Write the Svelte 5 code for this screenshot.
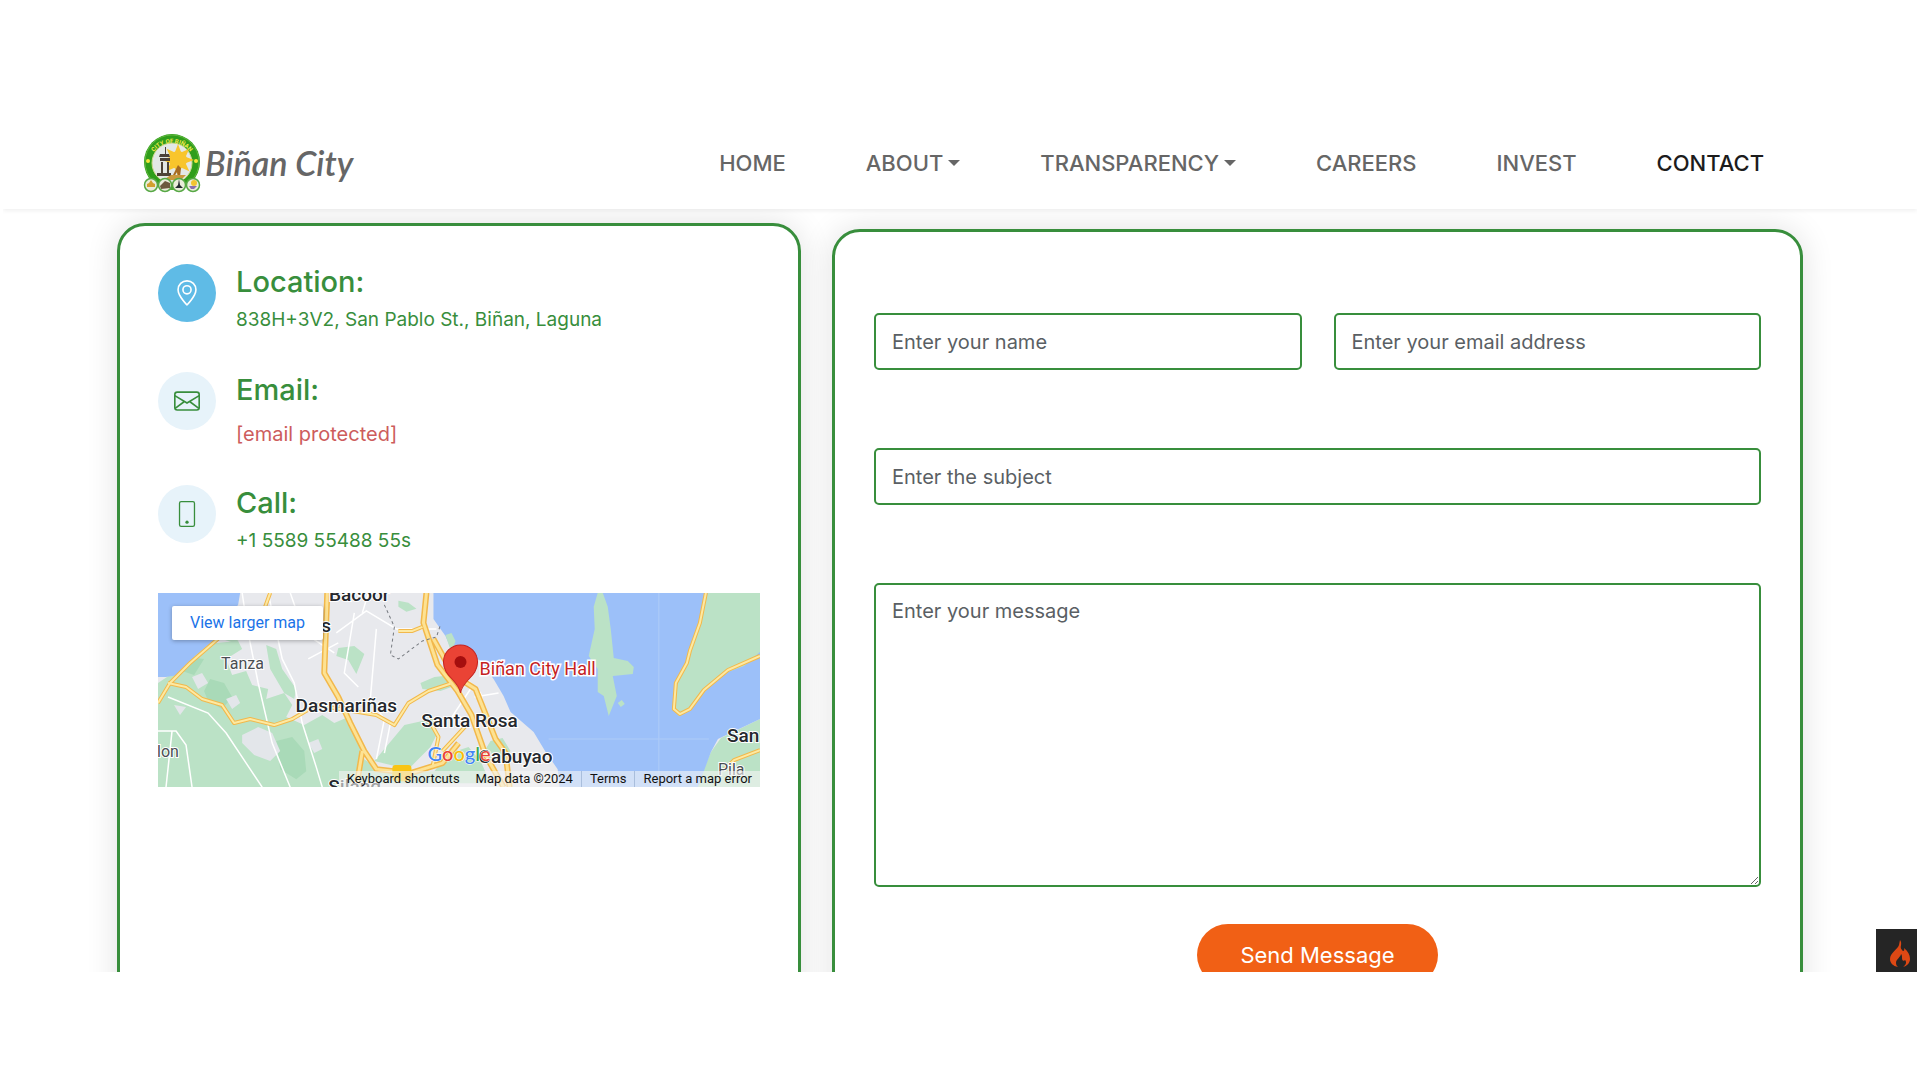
<script>
  const nav = [
    { label: 'HOME' },
    { label: 'ABOUT', menu: true },
    { label: 'TRANSPARENCY', menu: true },
    { label: 'CAREERS' },
    { label: 'INVEST' },
    { label: 'CONTACT', active: true }
  ];
  const rays = [0, 45, 90, 135, 180, 225, 270, 315];
</script>

<div class="page">
  <div class="screen">
    <header>
      <a class="brand" href="#home">
        <svg width="58" height="60" viewBox="0 0 58 60" aria-hidden="true">
          <defs><path id="rim" d="M6 33a23 23 0 1 1 46 0" /></defs>
          <circle cx="29" cy="29" r="28" fill="#2f9e1b" />
          <circle cx="29" cy="29" r="27" fill="none" stroke="#62b83e" />
          <circle cx="29" cy="30" r="20" fill="#e3e8e6" stroke="#cfd98b" />
          <text class="rim"><textPath href="#rim" startOffset="50%" text-anchor="middle">CITY OF BIÑAN</textPath></text>
          <g fill="#f8c52c">
            <circle cx="35" cy="27" r="9" />
            {#each rays as r}
              <path d="M32 19l3-8 3 8z" transform="rotate({r} 35 27)" />
            {/each}
          </g>
          <path d="M20 21h2v-7h1v7h3l1 3H16l1-3zM17 25h10v3H17zM18 29h2v11h-2zM24 29h2v11h-2zM14 40h14v3H14z" fill="#4c4238" />
          <path d="M35 32l3 3-1 9h-2l-1-5-3 5h-2l4-8z" fill="#a66b22" />
          <path d="M28 42h15l-5 5H20z" fill="#c99a3d" />
          <circle cx="5" cy="28" r="2" fill="#f7e53a" /><circle cx="53" cy="28" r="2" fill="#f7e53a" />
          <g fill="#e9edda" stroke="#57a845" stroke-width="1.5">
            <circle cx="8" cy="52" r="6.5" /><circle cx="22" cy="52" r="6.5" /><circle cx="36" cy="52" r="6.5" /><circle cx="50" cy="52" r="6.5" />
          </g>
          <path d="M4 54v-3l2-1 2-3 2 3 2 1v3z" fill="#d2a02f" />
          <path d="M17 53l5-5 5 2v5l-9 1z" fill="#6d5a3e" />
          <path d="M32 55l3-3 1-6 1 6 3 3z" fill="#252b30" />
          <path d="M46 53h8l-3 3h-3z" fill="#8a6fae" /><circle cx="51" cy="50" r="3" fill="#f3c431" />
        </svg>
        <span>Biñan City</span>
      </a>
      <nav>
        {#each nav as item}
          <a href="#{item.label.toLowerCase()}" class:active={item.active}>{item.label}{#if item.menu}<i class="caret"></i>{/if}</a>
        {/each}
      </nav>
    </header>

    <main>
      <section class="card info">
        <div class="item">
          <span class="badge solid">
            <svg width="26" height="26" viewBox="0 0 16 16" fill="currentColor" aria-hidden="true">
              <path d="M12.166 8.94c-.524 1.062-1.234 2.12-1.96 3.07A31.493 31.493 0 0 1 8 14.58a31.481 31.481 0 0 1-2.206-2.57c-.726-.95-1.436-2.008-1.96-3.07C3.304 7.867 3 6.862 3 6a5 5 0 0 1 10 0c0 .862-.305 1.867-.834 2.94zM8 16s6-5.686 6-10A6 6 0 0 0 2 6c0 4.314 6 10 6 10z" />
              <path d="M8 8a2 2 0 1 1 0-4 2 2 0 0 1 0 4zm0 1a3 3 0 1 0 0-6 3 3 0 0 0 0 6z" />
            </svg>
          </span>
          <div>
            <h4>Location:</h4>
            <p>838H+3V2, San Pablo St., Biñan, Laguna</p>
          </div>
        </div>
        <div class="item mail">
          <span class="badge">
            <svg width="26" height="26" viewBox="0 0 16 16" fill="none" stroke="currentColor" aria-hidden="true">
              <rect x=".5" y="2.5" width="15" height="11" rx="1.5" />
              <path d="M.5 4.7L8 9.2l7.500-4.500M.7 12.500l5.700-4.200M15.300 12.500L9.600 8.300" />
            </svg>
          </span>
          <div>
            <h4>Email:</h4>
            <p><a href="#email">[email protected]</a></p>
          </div>
        </div>
        <div class="item">
          <span class="badge">
            <svg width="26" height="26" viewBox="0 0 16 16" aria-hidden="true">
              <rect x="3.400" y=".4" width="9.200" height="15.200" rx="1" fill="none" stroke="currentColor" stroke-width=".8" />
              <circle cx="8" cy="13" r="1" fill="currentColor" />
            </svg>
          </span>
          <div>
            <h4>Call:</h4>
            <p>+1 5589 55488 55s</p>
          </div>
        </div>

        <div class="map">
          <svg class="tiles" viewBox="0 0 601 194" preserveAspectRatio="xMidYMid slice" role="img" aria-label="Map of Biñan City Hall">
            <rect width="601" height="194" fill="#e8e9ed" />
            <g fill="#bbe2c6">
              <path d="M0 90L12 82 40 58 58 50 80 48 84 56 68 66 74 82 88 78 94 92 110 96 108 106 126 100 134 112 128 124 146 132 164 122 176 130 190 124 200 140 206 194H0z" />
              <path d="M108 52l10 4 6 20 14 20-2 10-10-6-14-24zM58 44l24-8 6 6-12 8zM246 132l18-4 10-6 4 20-6 12-22 22-34-8zM200 162l20 14 30 2 26 0 10-14 12-6 12-4 12 14 10 22H204z" />
              <path d="M180 55l16-2 10 8-8 20-8-14-12-4zM240 8l10 2 8 6-10 3-8-5zM262 90l14-6 18-2 10 8-22 8-18-2z" />
              <path d="M344 145l-12 3-10 16 16 6 14-12zM537 194l15-35 10-14 39-19v68z" />
            </g>
            <g fill="#a9dab8">
              <path d="M52 86l14 4 8 14-10 12-14-8-4-10zM118 148l16-4 12 14 2 20-10 8-16-10zM30 64l16 2-10 16-12-4z" />
            </g>
            <g fill="#e3e6ea">
              <path d="M34 84l10-4 6 10-10 6zM84 142l16-8 14 6 8 18-10 10-16-6-12-12zM68 106l10-4 4 8-8 6zM16 112l12 2-6 8zM150 150l10-4 4 10-8 4z" />
            </g>
            <g fill="#9cc0f9">
              <path d="M0 0h82l-2 12-10 14-12 20-20 16-18 20-12 2-8 0z" />
              <path d="M275 0v26l12 17 6 14 14 6 14 4 14 19 10 17 7 16 23 20 12 20 12 17 2 18h138l13-35 7-13 42-20V0z" />
            </g>
            <path d="M549 0l-7 26-10 30-2 13-13 20-3 27 6 7 12-7 13-18 24-19 16-6 16-14V0zM439 0l-4 14 1 22-6 27 9 13v23l6 4 5 20 8-20-4-20 20-2 1-7-6-6-14-3-3-29-3-22-5-14zM459 110l4-3 3 4-4 3zM287 42l6-2 4 8-4 12z" fill="#bbe2c6" />
            <path d="M500 0v180M390 146h160" stroke="#aecbf8" fill="none" />
            <g fill="none" stroke="#fff" stroke-width="1.500">
              <path d="M84 0l6 40 10 50 14 60 18 44M110 0l14 66 12 24 8 40 14 44 6 20M132 0l14 40 30 20M10 104l40 16 18 20 20 30 16 24M0 138l18 0 10 14 6 42M14 138l-6 56M178 40l30-22 30 18 40 0M210 0l-6 20M218 36l-6 70 14 20-8 40M196 20l-10 60 14 14M150 66l30-16M232 130l-6 30M302 80l20 20 6 24M312 96l-20 30M340 100l-24 4" />
            </g>
            <g fill="none" stroke-linejoin="round">
              <g stroke="#f2b84b" stroke-width="4">
                <path d="M0 110l12-20 20-20 30-26 22-10 20-12 8-22M10 90l18 4 16 12 20 6 12 18 16-4 24 6 18-6 24-14 60 10 18 10 14-22 20-12 24-8M240 38l14 0 10-4M270 126l10 18-6 30M284 158l24-26M547 0l-6 30-10 28-3 12-11 20-2 26 6 5 10-5 14-19 24-20 32-14M601 157l-26 10-10 10" />
              </g>
              <g stroke="#f2b84b" stroke-width="6">
                <path d="M169 0l-3 80 14 24 12 26 14 28 12 18 34 4 32-10 16-20M204 158l-6 36M268 0l-3 30 14 42 20 26 14 24 14 40 18 32M275 46l20 36 22 14 20 50 10 14 4 34" />
              </g>
              <g stroke="#fde9a2" stroke-width="2">
                <path d="M0 110l12-20 20-20 30-26 22-10 20-12 8-22M10 90l18 4 16 12 20 6 12 18 16-4 24 6 18-6 24-14 60 10 18 10 14-22 20-12 24-8M240 38l14 0 10-4M270 126l10 18-6 30M284 158l24-26M547 0l-6 30-10 28-3 12-11 20-2 26 6 5 10-5 14-19 24-20 32-14M601 157l-26 10-10 10" />
              </g>
              <g stroke="#fde293" stroke-width="3">
                <path d="M169 0l-3 80 14 24 12 26 14 28 12 18 34 4 32-10 16-20M204 158l-6 36M268 0l-3 30 14 42 20 26 14 24 14 40 18 32M275 46l20 36 22 14 20 50 10 14 4 34" />
              </g>
            </g>
            <path d="M226 12l10 22-4 28 8 4 24-18 14-4 4-12" fill="none" stroke="#777b80" stroke-dasharray="3 3" />
            <rect x="234" y="172" width="19" height="16" rx="3" fill="#f8c514" />
            <g class="town">
              <text x="201" y="8" text-anchor="middle">Bacoor</text>
              <text x="163" y="39">s</text>
              <text x="188" y="119" text-anchor="middle">Dasmariñas</text>
              <text x="311" y="134" text-anchor="middle">Santa Rosa</text>
              <text x="394" y="170" text-anchor="end">Cabuyao</text>
              <text x="568" y="149">San</text>
              <text x="170" y="200">Silang</text>
            </g>
            <g class="village">
              <text x="63" y="76">Tanza</text>
              <text x="-1" y="164">lon</text>
              <text x="559" y="182">Pila</text>
            </g>
            <path d="M302 100c-2-13-17-16-17-31a17 17 0 0 1 34 0c0 15-15 18-17 31z" fill="#ea4335" stroke="#c5221f" />
            <circle cx="302" cy="69" r="6" fill="#a50e0e" />
            <text class="place" x="321" y="82">Biñan City Hall</text>
            <text class="google" x="269" y="168"><tspan fill="#4285f4">G</tspan><tspan fill="#ea4335">o</tspan><tspan fill="#fbbc04">o</tspan><tspan fill="#4285f4">g</tspan><tspan fill="#34a853">l</tspan><tspan fill="#ea4335">e</tspan></text>
          </svg>
          <a class="larger" href="#map">View larger map</a>
          <div class="credits">
            <button type="button">Keyboard shortcuts</button>
            <span>Map data ©2024</span>
            <a href="#terms">Terms</a>
            <a href="#report">Report a map error</a>
          </div>
        </div>
      </section>

      <form class="card message">
        <input type="text" aria-label="Your name" placeholder="Enter your name" />
        <input type="email" aria-label="Your email" placeholder="Enter your email address" />
        <input class="wide" type="text" aria-label="Subject" placeholder="Enter the subject" />
        <textarea class="wide" aria-label="Message" placeholder="Enter your message"></textarea>
        <button class="send" type="button">Send Message</button>
      </form>
    </main>

    <button class="debug" type="button" aria-label="Open debug toolbar">
      <svg width="20" height="27" viewBox="0 0 20 27" aria-hidden="true">
        <path d="M10 0c3 4-1 7 2 10 1 2 3 1 2-2 4 3 6 7 6 11 0 4-3 7-7 8 3-2 4-5 2-7-2 2-3 0-3-2 0-2 0-3-1-4 0 3-5 5-5 9 0 2 1 3 2 4-5-1-8-4-8-8 0-6 8-10 9-14z" fill="#dd4814" />
      </svg>
    </button>
  </div>
</div>

<style>
  :global(body) {
    margin: 0;
    background: #fff;
  }
  .page {
    box-sizing: border-box;
    height: 100vh;
    padding: 97px 3px 108px;
    font-family: Inter, "Open Sans", sans-serif;
    color: #388e3c;
  }
  .screen {
    position: relative;
    height: 100%;
    overflow: hidden;
  }
  a {
    color: inherit;
    text-decoration: none;
  }
  button {
    border: 0;
    font: inherit;
  }
  header {
    position: relative;
    z-index: 1;
    display: flex;
    align-items: center;
    justify-content: space-between;
    box-sizing: border-box;
    height: 112px;
    padding: 20px 153px 0 140px;
    background: #fff;
    box-shadow: 0 2px 4px rgba(0, 0, 0, 0.06);
  }
  .brand {
    display: flex;
    align-items: center;
    gap: 4px;
    color: #666;
  }
  .brand span {
    font: italic 600 34px/40px Lato, sans-serif;
  }
  .rim {
    font: 700 6px Roboto, sans-serif;
    fill: #f3ea4d;
  }
  nav {
    display: flex;
    gap: 80px;
  }
  nav a {
    display: flex;
    align-items: center;
    font-size: 22px;
    line-height: 32px;
    font-weight: 500;
    color: #666;
  }
  nav .active {
    color: #1c1c1c;
  }
  .caret {
    margin-left: 5px;
    border: 6px solid transparent;
    border-top-color: currentColor;
    border-bottom: 0;
  }
  main {
    display: grid;
    grid-template-columns: 684fr 971fr;
    gap: 31px;
    padding: 14px 114px 0;
  }
  .card {
    box-sizing: border-box;
    height: 820px;
    border: 3px solid #388e3c;
    border-radius: 28px;
    background: #fff;
    box-shadow: 0 0 32px rgba(0, 0, 0, 0.12);
  }
  .info {
    padding: 38px;
  }
  .item {
    display: flex;
    gap: 20px;
    margin-bottom: 32px;
  }
  .item div {
    height: 76px;
  }
  .mail div {
    height: 81px;
  }
  .badge {
    display: grid;
    place-items: center;
    width: 58px;
    height: 58px;
    border-radius: 50%;
    background: #e7f3fa;
  }
  .solid {
    background: #5fbbe6;
    color: #fff;
  }
  h4 {
    margin: 0;
    font-size: 29px;
    line-height: 36px;
    font-weight: 500;
  }
  p {
    margin: 6px 0 0;
    font-size: 19px;
    line-height: 28px;
  }
  .mail p {
    margin-top: 12px;
    font-size: 20px;
    color: #cd5c5c;
  }
  .map {
    position: relative;
    height: 194px;
    overflow: hidden;
    font-family: Roboto, sans-serif;
  }
  .tiles {
    display: block;
    width: 100%;
    height: 100%;
  }
  .tiles text {
    paint-order: stroke;
  }
  .town {
    font: 500 19px Roboto, sans-serif;
    fill: #25282d;
    stroke: #fff;
    stroke-width: 2px;
  }
  .village {
    font: 400 16px Roboto, sans-serif;
    fill: #4a4d52;
    stroke: #fff;
    stroke-width: 2px;
  }
  .place {
    font: 400 18px Roboto, sans-serif;
    fill: #c5221f;
    stroke: #fff;
    stroke-width: 3px;
  }
  .google {
    font: 500 20px Lato, sans-serif;
    stroke: #fff;
    stroke-width: 1px;
  }
  .larger {
    position: absolute;
    top: 13px;
    left: 14px;
    padding: 0 18px;
    border-radius: 2px;
    background: #fff;
    box-shadow: 0 1px 4px rgba(0, 0, 0, 0.3);
    font-size: 16px;
    line-height: 34px;
    color: #1a73e8;
  }
  .credits {
    position: absolute;
    right: 0;
    bottom: 0;
    display: flex;
    background: rgba(245, 245, 245, 0.6);
    font-size: 13px;
    line-height: 16px;
    color: #111;
  }
  .credits > * {
    padding: 0 8px;
  }
  .credits button {
    background: none;
    color: inherit;
  }
  .credits a {
    border-left: 1px solid #a9bedc;
  }
  .message {
    display: grid;
    grid-template-columns: 1fr 1fr;
    align-content: start;
    gap: 78px 32px;
    margin-top: 6px;
    padding: 81px 39px 0;
  }
  input,
  textarea {
    box-sizing: border-box;
    width: 100%;
    height: 57px;
    padding: 12px 16px;
    border: 2px solid #388e3c;
    border-radius: 5px;
    background: #fff;
    font: 400 20px/28px Inter, "Open Sans", sans-serif;
    color: #333;
  }
  ::placeholder {
    color: #5a5f64;
    opacity: 1;
  }
  .wide,
  .send {
    grid-column: 1 / -1;
  }
  textarea {
    display: block;
    height: 304px;
    resize: vertical;
  }
  .send {
    justify-self: center;
    margin-top: -41px;
    padding: 0 43px;
    border-radius: 32px;
    background: #f16015;
    font-size: 22px;
    line-height: 62px;
    color: #fff;
  }
  .debug {
    position: absolute;
    right: 0;
    bottom: 0;
    display: grid;
    place-items: center end;
    width: 41px;
    height: 43px;
    padding: 6px 7px 0 0;
    background: #252525;
  }
</style>
